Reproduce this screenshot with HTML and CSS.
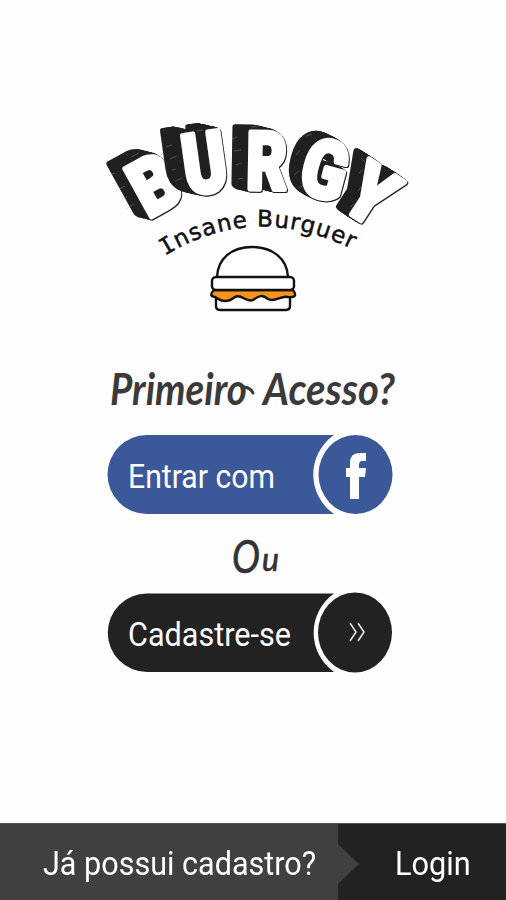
FILE: index.html
```
<!DOCTYPE html>
<html lang="pt-BR">
<head>
<meta charset="utf-8">
<title>Burgy</title>
<link rel="stylesheet" href="styles.css">
</head>
<body>
<main class="screen">
  <svg class="logo" width="326" height="208" viewBox="90 112 326 208" role="img" aria-label="Burgy Insane Burguer">
    <g class="wordmark">
      <g class="b"><text transform="translate(148 219) rotate(-29) scale(.84 .95)">B</text></g>
      <g class="u"><text transform="translate(187 195) rotate(-8) scale(.8 1.02)">U</text></g>
      <g class="r"><text transform="translate(246 189) rotate(1) scale(.76 .98)">R</text></g>
      <g class="g"><text transform="translate(296 191) rotate(15) scale(.8 .98)">G</text></g>
      <g class="y"><text transform="translate(338 206) rotate(33) scale(.84 .97)">Y</text></g>
    </g>
    <g class="scratches">
      <path d="M108 176l7-3M112 184l4-1M116 191l9-5M122 200l5-3M126 209l8-5M131 157l8-4M166 147l6-2M170 159l7-3M172 170l4-1M175 181l7-3M197 131l6-1M232 139l5-2M234 151l7-1M236 165l5-2M238 179l5-1M251 127l8-1M296 155l4-5M294 175l5-4M299 188l4-3M306 136l6-2M361 158l4 4M359 173l4-4M358 191l3-4M350 207l4-3"/>
    </g>
    <path id="arc" d="M165 256Q254 200 356 251" fill="none"/>
    <text class="tagline"><textPath href="#arc" textLength="196"><tspan class="slab">I</tspan>nsane Burguer</textPath></text>
    <g class="burger">
      <path d="M217 277C218 258 232 247 252 247S287 258 288 277"/>
      <path d="M216 294V306Q216 310 220 310H286Q290 310 290 306V294Z"/>
      <path class="filling" d="M214 290Q208 296 215 297C223 303 229 302 235 297C241 293 246 303 253 300C259 296 262 294 268 299C275 303 281 295 288 297Q299 298 293 290Z"/>
      <rect x="212" y="277" width="82" height="13" rx="4"/>
    </g>
  </svg>

  <svg class="heading" width="300" height="58" viewBox="104 360 300 58">
    <text x="111" y="405" textLength="137" lengthAdjust="spacingAndGlyphs">Primeiro</text>
    <text x="264" y="405" textLength="132" lengthAdjust="spacingAndGlyphs">Acesso?</text>
    <path class="swash" d="M245 387Q252 388 254 393"/>
  </svg>

  <a class="pill facebook">
    <svg width="292" height="82" viewBox="107 433 292 82">
      <path d="M147 435H334A48 48 0 0 0 334 514H147A39.500 39.500 0 0 1 147 435Z"/>
      <ellipse cx="355.500" cy="474.500" rx="37" ry="39.500"/>
      <text x="128" y="488" textLength="147" lengthAdjust="spacingAndGlyphs">Entrar com</text>
      <path class="mark" d="M350 499V477H346V468H350V463Q350 453 359 453H366V461H362Q359 461 359 465V468H366L365 477H359V499Z"/>
    </svg>
  </a>

  <svg class="or" width="60" height="46" viewBox="223 533 60 46">
    <text class="initial" x="232" y="573" textLength="28" lengthAdjust="spacingAndGlyphs">O</text>
    <text x="262" y="571" textLength="17" lengthAdjust="spacingAndGlyphs">u</text>
  </svg>

  <a class="pill register">
    <svg width="292" height="82" viewBox="107 591 292 82">
      <path d="M147 593.500H334A48 48 0 0 0 334 672H147A39.250 39.250 0 0 1 147 593.500Z"/>
      <ellipse cx="355" cy="632.500" rx="37" ry="40"/>
      <text x="128" y="646" textLength="163" lengthAdjust="spacingAndGlyphs">Cadastre-se</text>
      <path class="chevrons" d="M350 623L356 632L350 641M358 623L364 632L358 641"/>
    </svg>
  </a>

  <footer class="footer">
    <div class="question"><span>Já possui cadastro?</span></div>
    <a class="login"><span>Login</span></a>
  </footer>
</main>
</body>
</html>
```
FILE: styles.css
```
* { box-sizing: border-box; }
body { margin: 0; background: #fefefe; font-family: Roboto, "Liberation Sans", sans-serif; }
svg { display: block; overflow: visible; }
.screen { width: 506px; height: 900px; display: flex; flex-direction: column; align-items: center; padding-top: 112px; }
.logo { flex: none; }
.wordmark { --ink: #202020; }
.wordmark text {
  font: 900 82px Roboto, sans-serif;
  fill: #fff;
  stroke: #fff;
  stroke-width: 5px;
  stroke-linejoin: round;
}
/* Thin outline first, then doubling offsets build the solid side of each letter. */
.wordmark g {
  filter: drop-shadow(1px 1px 0 var(--ink)) drop-shadow(-1px 0 0 var(--ink))
    drop-shadow(calc(var(--dx) * 1px) calc(var(--dy) * 1px) 0 var(--ink))
    drop-shadow(calc(var(--dx) * 2px) calc(var(--dy) * 2px) 0 var(--ink))
    drop-shadow(calc(var(--dx) * 4px) calc(var(--dy) * 4px) 0 var(--ink))
    drop-shadow(calc(var(--dx) * 8px) calc(var(--dy) * 8px) 0 var(--ink));
}
.b { --dx: -1; --dy: -.15; }
.u { --dx: -1.05; --dy: -.2; }
.r { --dx: -.9; --dy: -.2; }
.g { --dx: -.7; --dy: -.35; }
.y { --dx: -.65; --dy: -.5; }
.scratches { fill: none; stroke: #aaa; stroke-width: .6; opacity: .6; }
.tagline { font: 400 23px "DejaVu Sans", sans-serif; fill: #111; stroke: #111; stroke-width: .5px; }
.tagline .slab { font-family: "DejaVu Sans Mono", monospace; }
.burger { fill: #fff; stroke: #111; stroke-width: 2.4; stroke-linejoin: round; stroke-linecap: round; }
.burger .filling { fill: #f7941e; }
.heading { margin-top: 40px; flex: none; }
.heading text { font: italic 700 43px Lato, cursive; fill: #3a3a3a; }
.heading .swash { fill: none; stroke: #3a3a3a; stroke-width: 3; stroke-linecap: round; }
.pill { display: block; }
.facebook { margin-top: 15px; fill: #3b5998; }
.register { margin-top: 12px; fill: #222; }
.pill text { font: 400 34px Roboto, sans-serif; fill: #fff; }
.pill .mark { fill: #fff; }
.pill .chevrons { fill: none; stroke: #eee; stroke-width: 1.5; }
.or { margin-top: 18px; }
.or text { font: italic 400 32px Lato, cursive; fill: #333; stroke: #333; stroke-width: .7px; }
.or .initial { font-size: 46px; }
.footer { width: 100%; height: 77px; margin-top: auto; display: flex; color: #fff; font-size: 33px; background: #222; border-top: 1px solid #555; }
.footer span { display: block; transform-origin: 0 50%; white-space: nowrap; }
.question { position: relative; width: 338px; padding: 20px 0 0 43px; background: #404040; }
.question::after { content: ""; position: absolute; left: 338px; top: 20px; border: solid transparent; border-width: 20px 0 20px 21px; border-left-color: #404040; }
.login { padding: 20px 0 0 57px; }
.question span { transform: scaleX(.926); }
.login span { transform: scaleX(.93); }
```
